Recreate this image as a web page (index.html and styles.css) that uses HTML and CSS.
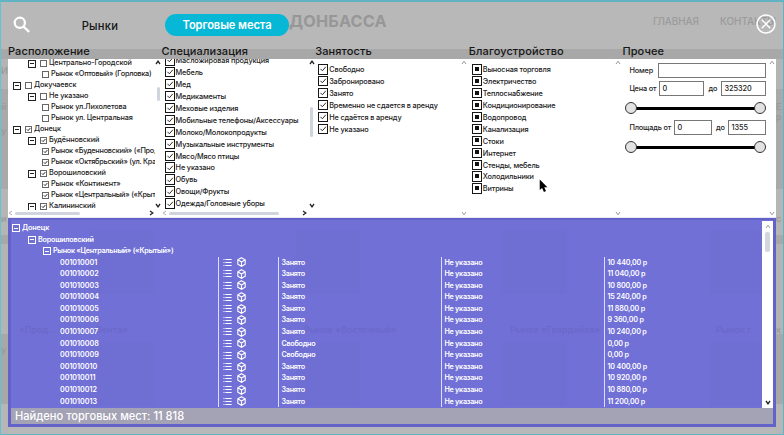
FILE: index.html
```
<!DOCTYPE html>
<html lang="ru">
<head>
<meta charset="utf-8">
<title>Торговые места</title>
<link rel="stylesheet" href="styles.css">
</head>
<body>
<svg class="defs" width="0" height="0">
  <symbol id="up" viewBox="0 0 6 5"><path d="M1 4 3 1.2 5 4"/></symbol>
  <symbol id="down" viewBox="0 0 6 5"><path d="M1 1 3 3.8 5 1"/></symbol>
  <symbol id="left" viewBox="0 0 5 6"><path d="M4 1 1.2 3 4 5"/></symbol>
  <symbol id="right" viewBox="0 0 5 6"><path d="M1 1 3.8 3 1 5"/></symbol>
  <symbol id="list" viewBox="0 0 9 9"><path d="M2.4 1.5H8.6M2.4 4.5H8.6M2.4 7.5H8.6M.5 1.5h1M.5 4.5h1M.5 7.5h1"/></symbol>
  <symbol id="cube" viewBox="0 0 9 10"><path d="M4.5.7 8.2 2.8V7.1L4.5 9.3.8 7.1V2.8ZM.8 2.8 4.5 5 8.2 2.8M4.5 5V9.3"/></symbol>
</svg>
<div class="page">
  <div class="ghost-bar"></div>
  <div class="ghost-title">ДОНБАССА</div>
  <div class="ghost-nav"><span>ГЛАВНАЯ</span><span>КОНТАКТЫ</span></div>
  <div class="ghost-edge ghost-left"><i>И</i><i>й</i><i>у</i><i>и</i><i>у</i></div>
  <div class="ghost-edge ghost-right"><i>Е</i><i>р</i><i>с</i><i>к</i></div>
</div>
<main class="app">
  <header class="top">
    <svg class="search" viewBox="0 0 18 18"><circle cx="6.8" cy="6.8" r="5.1"/><path d="m10.6 10.6 5.6 5.4"/></svg>
    <span class="tab">Рынки</span>
    <span class="tab active">Торговые места</span>
    <svg class="close" viewBox="0 0 20 20"><circle cx="10" cy="10" r="9"/><path d="m5.8 5.8 8.4 8.4M14.2 5.8 5.8 14.2"/></svg>
  </header>
  <div class="heads"><span>Расположение</span><span>Специализация</span><span>Занятость</span><span>Благоустройство</span><span>Прочее</span></div>
  <section class="filters">
    <div class="col scroll-x">
      <div class="tree" id="tree"></div>
      <div class="vbar dark"><svg><use href="#up"/></svg><b class="thumb t1"></b><svg><use href="#down"/></svg></div>
      <div class="hbar"><svg><use href="#left"/></svg><b class="h1"></b><svg class="on"><use href="#right"/></svg></div>
    </div>
    <div class="col scroll-x">
      <div class="checks spec" id="spec"></div>
      <div class="vbar dark"><svg><use href="#up"/></svg><b class="thumb t2"></b><svg><use href="#down"/></svg></div>
      <div class="hbar"><svg><use href="#left"/></svg><b class="h2"></b><svg class="on"><use href="#right"/></svg></div>
    </div>
    <div class="col">
      <div class="checks" id="busy"></div>
      <div class="vbar"><svg><use href="#up"/></svg><svg><use href="#down"/></svg></div>
    </div>
    <div class="col">
      <div class="checks" id="comfort"></div>
      <div class="vbar"><svg><use href="#up"/></svg><svg><use href="#down"/></svg></div>
    </div>
    <div class="col">
      <div class="other">
        <div class="line"><span class="l1">Номер</span><span class="input wide"></span></div>
        <div class="line"><span class="l2">Цена от</span><span class="input">0</span><span class="to">до</span><span class="input">325320</span></div>
        <div class="slider"><i></i><i></i></div>
        <div class="line area"><span class="l3">Площадь от</span><span class="input small">0</span><span class="to">до</span><span class="input small">1355</span></div>
        <div class="slider"><i></i><i></i></div>
      </div>
      <div class="vbar"><svg><use href="#up"/></svg><svg><use href="#down"/></svg></div>
    </div>
  </section>
  <section class="results">
    <div class="cards"><i></i><i></i><i></i><i></i><i></i><i></i><i></i><i></i></div>
    <div class="ghost-names"><span>«Прод... рынок «Вента»</span><span>Рынок «Восточный»</span><span>Рынок «Гвардейка»</span><span>Рынок г</span></div>
    <div class="body">
      <div class="data">
        <div class="group g1"><i class="minus"></i>Донецк</div>
        <div class="group g2"><i class="minus"></i>Ворошиловский</div>
        <div class="group g3"><i class="minus"></i>Рынок «Центральный» («Крытый»)</div>
        <div id="rows"></div>
      </div>
      <div class="rbar"><svg><use href="#up"/></svg><b></b><svg class="on"><use href="#down"/></svg></div>
    </div>
    <footer>Найдено торговых мест: 11 818</footer>
  </section>
</main>
<svg class="cursor" viewBox="0 0 8 13"><path d="M.5.5V10.3L2.7 8.4 4.4 12 6.3 11.2 4.7 7.7H7.6Z"/></svg>
<script src="app.js"></script>
</body>
</html>
```
FILE: app.js
```
const put = (id, html) => { document.getElementById(id).innerHTML = html; };
const tick = '<svg viewBox="0 0 10 10"><path d="M1.8 4.8 4.2 7.2 8.6 2.2"/></svg>';

// level, checked, label
const tree = [
  [2, 0, 'Центрально-Городской'], [3, 0, 'Рынок «Оптовый» (Горловка)'],
  [1, 0, 'Докучаевск'], [2, 0, 'Не указано'], [3, 0, 'Рынок ул.Лихолетова'],
  [3, 0, 'Рынок ул. Центральная'], [1, 1, 'Донецк'], [2, 1, 'Будённовский'],
  [3, 1, 'Рынок «Буденновский» («Про,'], [3, 1, 'Рынок «Октябрьский» (ул. Кра'],
  [2, 1, 'Ворошиловский'], [3, 1, 'Рынок «Континент»'],
  [3, 1, 'Рынок «Центральный» («Крыт'], [2, 1, 'Калининский']
];
put('tree', tree.map(([l, c, t]) =>
  `<div class="node n${l}">${l < 3 ? '<i class="minus"></i>' : ''}<i class="box">${c ? tick : ''}</i><span${t.length > 25 ? ' class="tight"' : ''}>${t}</span></div>`).join(''));

const checks = (list, mark) => list.map(t => `<div class="check"><i>${mark}</i><span>${t}</span></div>`).join('');
put('spec', checks(['Масложировая продукция', 'Мебель', 'Мед', 'Медикаменты', 'Меховые изделия',
  'Мобильные телефоны/Аксессуары', 'Молоко/Молокопродукты', 'Музыкальные инструменты',
  'Мясо/Мясо птицы', 'Не указано', 'Обувь', 'Овощи/Фрукты', 'Одежда/Головные уборы'], tick));
put('busy', checks(['Свободно', 'Забронировано', 'Занято', 'Временно не сдается в аренду',
  'Не сдаётся в аренду', 'Не указано'], tick));
put('comfort', checks(['Выносная торговля', 'Электричество', 'Теплоснабжение', 'Кондиционирование',
  'Водопровод', 'Канализация', 'Стоки', 'Интернет', 'Стенды, мебель', 'Холодильники', 'Витрины'], '<b></b>'));

const prices = ['10 440', '11 040', '10 800', '15 240', '11 880', '9 360', '10 240', '0', '0',
  '10 400', '10 920', '10 880', '11 200'];
put('rows', prices.map((p, i) => `<div class="row"><span class="num">${'0010100' + String(i + 1).padStart(2, '0')}</span>
<span class="acts"><svg class="ls"><use href="#list"/></svg><svg class="cb"><use href="#cube"/></svg></span>
<span class="st">${p === '0' ? 'Свободно' : 'Занято'}</span><span class="sp">Не указано</span><span class="pr">${p},00 р</span></div>`).join(''));
```
FILE: styles.css
```
* { box-sizing: border-box; }
body {
  margin: 0; width: 784px; height: 435px; overflow: hidden; position: relative;
  background: #b8b8b8; color: #222;
  font: 500 7.3px/11px Inter, "Noto Sans", sans-serif;
  letter-spacing: -.14px;
}
.defs { position: absolute; }
svg { fill: none; stroke: currentColor; display: block; flex: none; }
i { font-style: normal; }

.page { position: absolute; inset: 0; border: 1px solid #5fb3c3; border-top-width: 2px; border-left-color: #62c4d0; color: #a0a0a0; letter-spacing: 0; }
.ghost-bar { position: absolute; top: 47px; left: 0; right: 0; height: 10px; background: #a8a8a8; }
.ghost-title { position: absolute; left: 288px; top: 9px; font: 700 16.3px/20px Inter, sans-serif; letter-spacing: .15px; color: #979797; }
.ghost-nav { position: absolute; left: 652px; top: 13px; display: flex; gap: 21px; font: 500 9.9px/12px Inter, sans-serif; color: #9b9b9b; }
.ghost-edge { position: absolute; top: 57px; bottom: 0; width: 7px; overflow: hidden; background: linear-gradient(#b4b4b4 0 30px, #a9a9a9 30px 130px, #b5b5b5 130px 176px, #a8a8a8 176px 185px, #b4b4b4 185px 275px, #a8a8a8 275px 345px, #b6b6b6 345px); font-size: 9px; color: #999; }
.ghost-edge i { position: absolute; left: 0; }
.ghost-left { left: 0; }
.ghost-right { right: 0; }
.ghost-left i:nth-child(1) { top: 6px; }
.ghost-left i:nth-child(2) { top: 42px; }
.ghost-left i:nth-child(3) { top: 66px; }
.ghost-left i:nth-child(4) { top: 154px; }
.ghost-left i:nth-child(5) { top: 285px; }
.ghost-right i:nth-child(1) { top: 42px; }
.ghost-right i:nth-child(2) { top: 52px; }
.ghost-right i:nth-child(3) { top: 154px; }
.ghost-right i:nth-child(4) { top: 265px; }

.app { position: relative; width: 768px; margin: 0 8px; }
.top { height: 45px; display: flex; align-items: flex-start; font-size: 11.2px; line-height: 22px; padding-top: 14px; letter-spacing: 0; }
.search { width: 18px; height: 18px; margin: 2px 0 0 5px; color: #fff; stroke-width: 2.2; }
.tab { width: 104px; margin-left: 17px; margin-top: 1px; text-align: center; letter-spacing: .25px; color: #161616; }
.active { width: 124px; margin: 0 0 0 13px; height: 22px; border-radius: 11px; background: #06b8d6; color: #fff; font-weight: 600; letter-spacing: -.1px; }
.close { width: 20px; height: 20px; color: #fff; margin: 0 0 0 auto; stroke-width: 1.5; }
.heads { display: grid; grid-template-columns: repeat(5, 1fr); height: 14px; font-size: 11px; line-height: 13px; letter-spacing: .1px; color: #161616; }

.filters { height: 159px; background: #fff; display: grid; grid-template-columns: repeat(5, 1fr); border-bottom: 1px solid #e7e7f8; }
.col { display: grid; grid-template: 1fr / minmax(0, 1fr) 10px; min-width: 0; height: 158px; overflow: hidden; }
.scroll-x { grid-template: 150px 8px / minmax(0, 1fr) 7px; }
.scroll-x .vbar { height: 150px; padding-left: 0; }
.vbar { display: flex; flex-direction: column; align-items: center; justify-content: space-between; padding: 1px 0 1px 1px; color: #999; position: relative; }
.vbar svg, .rbar svg { width: 6px; height: 5px; stroke-width: 1; }
.dark { color: #222; }
.dark svg { stroke-width: 1.3; }
.thumb { position: absolute; width: 3px; border-radius: 2px; background: #cfd4dd; }
.t1 { top: 28px; height: 14px; left: 2px; }
.t2 { top: 48px; height: 30px; left: 2px; }
.hbar { grid-column: 1 / 3; display: flex; align-items: center; padding: 0 8px 0 0; color: #a9a9a9; }
.hbar svg { width: 5px; height: 6px; }
.hbar b { height: 3px; border-radius: 2px; background: #d0d4dc; margin: 0 auto 0 2px; }
.h1 { width: 65px; }
.h2 { width: 110px; }
.hbar .on { color: #222; stroke-width: 1.3; }

.tree { overflow: hidden; height: 151px; display: flex; flex-direction: column; }
.node { display: flex; align-items: center; height: 11.03px; flex: none; white-space: nowrap; position: relative; top: -1.3px; }
.node span { margin-top: -1px; }
.node .tight { letter-spacing: -.24px; }
.n1 { padding-left: 5px; }
.n2 { padding-left: 20px; }
.n3 { padding-left: 34px; }
.minus { width: 8px; height: 8px; border: 1px solid #222; display: flex; align-items: center; justify-content: center; margin-right: 4px; flex: none; margin-top: 1px; }
.minus::before { content: ""; width: 4px; height: 1px; background: currentColor; }
.box { width: 7px; height: 7px; border: 1px solid #666; margin-right: 2px; flex: none; margin-top: 1px; }
.box svg { width: 5px; height: 5px; stroke-width: 2; }

.checks { padding: 5px 0 0 3px; overflow: hidden; }
.spec { padding-top: 0; height: 151px; }
.spec .check:first-child { margin-top: -4px; }
.check { height: 11.95px; display: flex; align-items: flex-start; white-space: nowrap; }
.check i { width: 10px; height: 10.5px; border: 1px solid #161616; margin-right: 1px; flex: none; display: flex; align-items: center; justify-content: center; }
.check i svg { width: 8px; height: 8px; stroke-width: 1.2; }
.check b { width: 4px; height: 4px; background: #111; margin-top: -1px; }
.check span { line-height: 12.6px; }

.other { padding: 4px 0 0 7px; width: 144px; }
.line { display: flex; align-items: center; height: 15px; }
.l1 { width: 29px; }
.l2 { width: 30px; }
.l3 { width: 45px; }
.to { flex: 1; text-align: center; }
.input { width: 45px; height: 15px; border: 1px solid #777; padding-left: 2px; line-height: 13px; letter-spacing: 0; }
.input.wide { width: 108px; }
.input.small { width: 38px; }
.line + .line { margin-top: 3px; }
.slider { margin: 6px 0 0 -4px; width: 141px; height: 12px; display: flex; justify-content: space-between; background: linear-gradient(#000, #000) center / 130px 3px no-repeat; }
.slider i { width: 12px; height: 12px; border-radius: 50%; background: #e2e2e2; border: 1px solid #333; }
.area { margin-top: 6px; }

.results { position: relative; height: 209px; background: #7170d6; border: 3px solid #6362c9; border-top-width: 2px; color: #fff; font-weight: 600; font-size: 7.2px; letter-spacing: -.27px; }
.body { display: flex; justify-content: space-between; height: 188px; position: relative; }
.data { padding-top: 2px; width: 751px; overflow: hidden; }
.group { height: 11.5px; display: flex; align-items: center; }
.results .minus { border-color: #fff; margin-right: 2px; margin-top: 1px; }
.g1 { padding-left: 1px; letter-spacing: -.1px; }
.g2 { padding-left: 17px; letter-spacing: -.2px; }
.g3 { padding-left: 32px; }
.row { display: grid; grid-template-columns: 206.5px 60px 163px 163px 1fr; height: 11.6px; line-height: 11px; }
.row span + span { border-left: 1px solid #dedcff; padding-left: 3px; }
.row .num { padding-left: 49px; letter-spacing: -.05px; }
.row .acts { display: flex; align-items: center; gap: 5px; padding-left: 4px; }
.row .pr { letter-spacing: -.18px; }
.ls { width: 9px; height: 9px; stroke-width: 1.1; }
.cb { width: 9px; height: 10px; stroke-width: 1.1; }
.rbar { width: 11px; background: #fff; display: flex; flex-direction: column; align-items: center; padding: 3px 0; color: #999; margin-top: 1px; }
.rbar b { width: 5px; height: 20px; margin-top: 3px; background: #d2d6df; border-radius: 2px; }
.rbar .on { margin-top: auto; color: #222; stroke-width: 1.4; }
footer { height: 16px; background: #a4a2b5; font: 500 11.1px/17px Inter, "Noto Sans", sans-serif; letter-spacing: 0; padding-left: 4px; position: relative; }
.cards { position: absolute; left: 78px; top: 11px; display: grid; grid-template-columns: repeat(4, 64px); grid-auto-rows: 63px; gap: 49px 143px; width: 684px; overflow: hidden; }
.cards i { background: #6f6ed3; }
.ghost-names { position: absolute; left: 8px; right: 14px; top: 104px; display: grid; grid-template-columns: 285px 206px 206px 1fr; font-size: 9px; letter-spacing: 0; color: #6a69ca; white-space: nowrap; }
.cursor { position: absolute; left: 539px; top: 179px; width: 9px; height: 14px; fill: #000; stroke: none; }
```
